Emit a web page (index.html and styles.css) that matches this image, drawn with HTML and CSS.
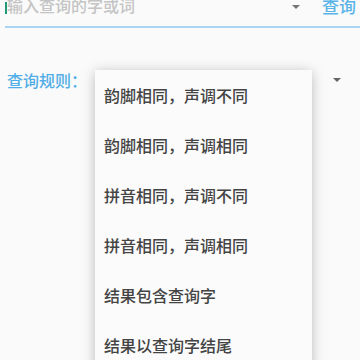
FILE: index.html
```html
<!DOCTYPE html>
<html lang="zh">
<head>
    <meta charset="UTF-8">
    <meta name="viewport" content="width=device-width, initial-scale=1.0">
    <title>查询</title>
    <link rel="stylesheet" href="styles.css">
</head>
<body>
    <div class="search">
        <span class="cursor"></span>
        <span class="hint">输入查询的字或词</span>
        <span class="arrow search-arrow"></span>
        <span class="search-btn">查询</span>
    </div>

    <div class="rule-row">
        <span class="rule-label">查询规则：</span>
        <span class="arrow rule-arrow"></span>
    </div>

    <!-- 弹出的规则菜单 -->
    <ul class="menu">
        <li>韵脚相同，声调不同</li>
        <li>韵脚相同，声调相同</li>
        <li>拼音相同，声调不同</li>
        <li>拼音相同，声调相同</li>
        <li>结果包含查询字</li>
        <li>结果以查询字结尾</li>
    </ul>
</body>
</html>
```

FILE: styles.css
```css
body {
    font-family: 'Noto Sans CJK SC', 'Noto Sans', sans-serif;
    font-weight: 500;
    margin: 0;
    background-color: #fafafa;
    color: #333;
    height: 360px;
    overflow: hidden;
    position: relative;
}
.search {
    display: flex;
    align-items: center;
    height: 32px;
    margin: -11px 0 0 5px;
    padding-bottom: 5px;
    border-bottom: 2px solid #a9d5f2;
}
.cursor {
    width: 2px;
    height: 12px;
    margin-top: 6px;
    background-color: #1f9a78;
}
.hint {
    font-size: 16px;
    color: #c4c4c4;
    flex: 1;
}
.arrow {
    width: 0;
    height: 0;
    border-left: 4px solid transparent;
    border-right: 4px solid transparent;
    border-top: 4px solid #555;
}
.search-arrow {
    margin-top: 3px;
    margin-right: 22px;
    opacity: 0.8;
}
.search-btn {
    font-size: 17px;
    color: #5ab4e8;
    margin-right: 4px;
}
.rule-row {
    display: flex;
    align-items: center;
    height: 20px;
    margin-top: 42px;
    padding-left: 7px;
}
.rule-label {
    font-size: 16px;
    color: #52aee6;
}
.rule-arrow {
    margin-left: auto;
    margin-right: 19px;
    border-top-color: #666;
}
.menu {
    position: absolute;
    left: 95px;
    top: 70px;
    width: 217px;
    margin: 0;
    padding: 0;
    list-style: none;
    background-color: #fbfbfb;
    box-shadow: 0 2px 12px rgba(0,0,0,0.26);
}
.menu li {
    height: 50px;
    line-height: 50px;
    padding-left: 9px;
    font-size: 16px;
    color: #444;
}
```
